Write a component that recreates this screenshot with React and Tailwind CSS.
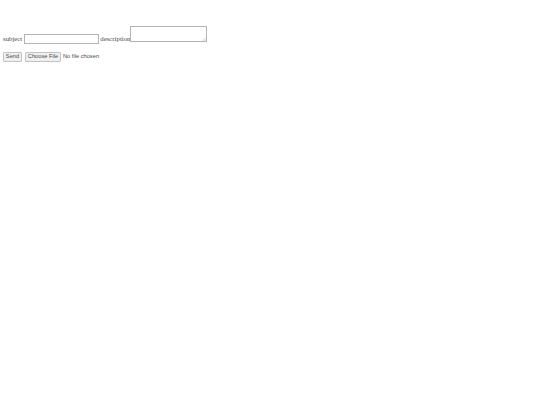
import React from 'react';

export default function App() {
  return (
    <div className="min-h-[405px] w-[540px] bg-white px-[3px] pt-[26px] text-black">
      <form className="flex flex-col" onSubmit={(e) => e.preventDefault()}>
        {/* first line: subject + description */}
        <div className="flex items-start font-['Liberation_Serif',serif] text-[6.8px] leading-[8px] text-[#4a4a4a]">
          <span className="mt-[9px]">subject</span>
          <input
            type="text"
            className="ml-[2px] mt-[8px] h-[10px] w-[75px] border border-[#b4b4b4] bg-white px-[1px] text-[6px] outline-none"
          />
          <span className="ml-[1px] mt-[9px]">description</span>
          <div className="relative">
            <textarea className="block h-[16px] w-[77px] resize-none border border-[#b4b4b4] bg-white p-[1px] text-[6px] outline-none" />
            <svg className="absolute bottom-[1px] right-[1px]" width="4" height="4" viewBox="0 0 4 4">
              <path d="M4 0.5L0.5 4M4 2.5L2.5 4" stroke="#b8b8b8" strokeWidth="0.6" />
            </svg>
          </div>
        </div>

        {/* second line: send + file */}
        <div className="mt-[8px] flex items-center font-['Liberation_Sans',Arial,sans-serif] text-[5.7px] leading-none text-[#4a4a4a]">
          <button
            type="submit"
            className="h-[10px] w-[19px] rounded-[1px] border border-[#c2c2c2] bg-[#f0f0f0]"
          >
            Send
          </button>
          <button
            type="button"
            className="ml-[3px] h-[10px] w-[36px] rounded-[1px] border border-[#c2c2c2] bg-[#f0f0f0]"
          >
            Choose File
          </button>
          <span className="ml-[2px]">No file chosen</span>
        </div>
      </form>
    </div>
  );
}
